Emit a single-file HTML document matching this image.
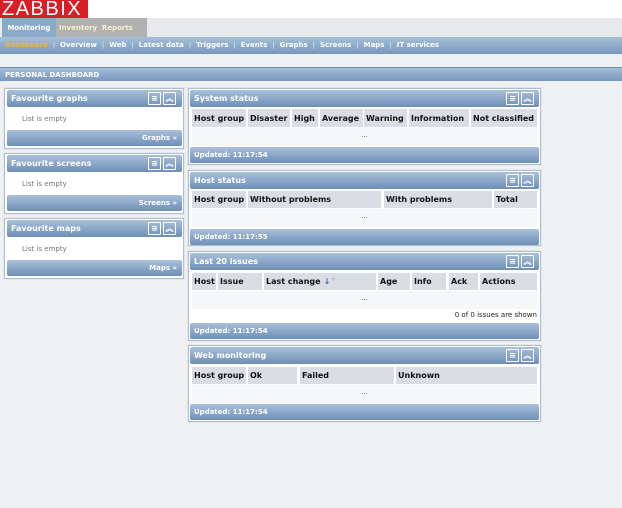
<!DOCTYPE html>
<html><head><meta charset="utf-8"><style>
*{margin:0;padding:0;box-sizing:border-box}
body{width:622px;height:508px;background:#eef0f2;font-family:"DejaVu Sans",sans-serif;font-size:8px;position:relative;overflow:hidden}
.a{position:absolute}
.hdr{position:absolute;background:linear-gradient(#a9c0da,#6e8fb6);color:#fff;font-weight:bold;font-size:8px;padding-left:4px;display:flex;align-items:center;border-radius:2px}
.box{position:absolute;background:#fff;border:1px solid #aebdd0;box-shadow:0 0 0 1px #e3e8ee}
.ic{position:absolute;top:2px;width:13px;height:13px;border:1px solid #fff;border-radius:1px;color:#fff;font-size:8px;line-height:11px;text-align:center}
.cell{position:absolute;background:#d9dee5;font-weight:bold;color:#111;font-size:8px;padding-left:2px;display:flex;align-items:center;white-space:nowrap;overflow:hidden}
.dots{position:absolute;color:#555;font-size:7px;text-align:center}
</style></head><body>
<div class="a" style="left:0;top:0;width:622px;height:18px;background:#fff"></div>
<div class="a" style="left:0;top:0;width:88px;height:18px;background:#d52027;color:#fff;font-family:'Liberation Sans',sans-serif;font-size:20px;line-height:19px;padding-left:2px;letter-spacing:1.5px">ZABBIX</div>
<div class="a" style="left:0;top:18px;width:622px;height:19px;background:#e7e9ec"></div>
<div class="a" style="left:2px;top:18px;width:54px;height:19px;background:#8ca9c9;color:#fff;font-weight:bold;font-size:7px;line-height:20px;text-align:center">Monitoring</div>
<div class="a" style="left:56px;top:18px;width:91px;height:19px;background:#b1b1b1;color:#f3efd0;font-weight:bold;font-size:7px;line-height:20px;padding-left:3px;white-space:pre">Inventory  Reports</div>
<div class="a" style="left:0;top:37px;width:622px;height:17px;background:linear-gradient(#a7bfd9,#7698bd);color:#fff;font-weight:bold;font-size:7px;line-height:17px;padding-left:5px;white-space:pre"><span style="color:#f2b233">Dashboard</span><span style="color:#d0dcea">  |  </span>Overview<span style="color:#d0dcea">  |  </span>Web<span style="color:#d0dcea">  |  </span>Latest data<span style="color:#d0dcea">  |  </span>Triggers<span style="color:#d0dcea">  |  </span>Events<span style="color:#d0dcea">  |  </span>Graphs<span style="color:#d0dcea">  |  </span>Screens<span style="color:#d0dcea">  |  </span>Maps<span style="color:#d0dcea">  |  </span>IT services</div>
<div class="a" style="left:0;top:67px;width:622px;height:14px;background:linear-gradient(#a3bcd7,#7898bd);color:#fff;font-weight:bold;font-size:7px;line-height:14px;padding-left:5px;border-top:1px solid #6d8cb1">PERSONAL DASHBOARD</div>

<div class="box" style="left:4px;top:88px;width:180px;height:61px"></div>
<div class="hdr" style="left:7px;top:90px;width:175px;height:17px">Favourite graphs<span class="ic" style="left:141px">≡</span><span class="ic" style="left:156px">︽</span></div>
<div class="a" style="left:22px;top:115px;color:#777;font-size:7px">List is empty</div>
<div class="hdr" style="left:7px;top:130px;width:175px;height:16px;justify-content:flex-end;padding-right:5px;font-size:7px">Graphs »</div>

<div class="box" style="left:4px;top:153px;width:180px;height:61px"></div>
<div class="hdr" style="left:7px;top:155px;width:175px;height:17px">Favourite screens<span class="ic" style="left:141px">≡</span><span class="ic" style="left:156px">︽</span></div>
<div class="a" style="left:22px;top:180px;color:#777;font-size:7px">List is empty</div>
<div class="hdr" style="left:7px;top:195px;width:175px;height:16px;justify-content:flex-end;padding-right:5px;font-size:7px">Screens »</div>

<div class="box" style="left:4px;top:218px;width:180px;height:61px"></div>
<div class="hdr" style="left:7px;top:220px;width:175px;height:17px">Favourite maps<span class="ic" style="left:141px">≡</span><span class="ic" style="left:156px">︽</span></div>
<div class="a" style="left:22px;top:245px;color:#777;font-size:7px">List is empty</div>
<div class="hdr" style="left:7px;top:260px;width:175px;height:16px;justify-content:flex-end;padding-right:5px;font-size:7px">Maps »</div>

<div class="box" style="left:188px;top:88px;width:353px;height:77px"></div>
<div class="hdr" style="left:190px;top:90px;width:349px;height:17px">System status<span class="ic" style="left:316px">≡</span><span class="ic" style="left:331px">︽</span></div>
<div class="cell" style="left:192px;top:109px;width:54px;height:18px">Host group</div>
<div class="cell" style="left:248px;top:109px;width:42px;height:18px">Disaster</div>
<div class="cell" style="left:292px;top:109px;width:26px;height:18px">High</div>
<div class="cell" style="left:320px;top:109px;width:43px;height:18px">Average</div>
<div class="cell" style="left:364px;top:109px;width:43px;height:18px">Warning</div>
<div class="cell" style="left:409px;top:109px;width:60px;height:18px">Information</div>
<div class="cell" style="left:471px;top:109px;width:66px;height:18px">Not classified</div>
<div class="a" style="left:192px;top:128px;width:345px;height:18px;background:#f5f7f9"></div>
<div class="dots" style="left:192px;top:131px;width:345px">...</div>
<div class="hdr" style="left:190px;top:147px;width:349px;height:16px;font-size:7px">Updated: 11:17:54</div>

<div class="box" style="left:188px;top:170px;width:353px;height:76px"></div>
<div class="hdr" style="left:190px;top:172px;width:349px;height:17px">Host status<span class="ic" style="left:316px">≡</span><span class="ic" style="left:331px">︽</span></div>
<div class="cell" style="left:192px;top:191px;width:54px;height:17px">Host group</div>
<div class="cell" style="left:248px;top:191px;width:133px;height:17px">Without problems</div>
<div class="cell" style="left:384px;top:191px;width:108px;height:17px">With problems</div>
<div class="cell" style="left:494px;top:191px;width:43px;height:17px">Total</div>
<div class="a" style="left:192px;top:209px;width:345px;height:18px;background:#f5f7f9"></div>
<div class="dots" style="left:192px;top:212px;width:345px">...</div>
<div class="hdr" style="left:190px;top:229px;width:349px;height:16px;font-size:7px">Updated: 11:17:55</div>

<div class="box" style="left:188px;top:251px;width:353px;height:90px"></div>
<div class="hdr" style="left:190px;top:253px;width:349px;height:17px">Last 20 issues<span class="ic" style="left:316px">≡</span><span class="ic" style="left:331px">︽</span></div>
<div class="cell" style="left:192px;top:273px;width:24px;height:17px">Host</div>
<div class="cell" style="left:218px;top:273px;width:44px;height:17px">Issue</div>
<div class="cell" style="left:264px;top:273px;width:112px;height:17px">Last change <span style="color:#3a63a8;margin-left:3px">↓</span><span style="color:#bbb;font-size:7px;margin-top:-6px">+</span></div>
<div class="cell" style="left:378px;top:273px;width:32px;height:17px">Age</div>
<div class="cell" style="left:412px;top:273px;width:34px;height:17px">Info</div>
<div class="cell" style="left:449px;top:273px;width:29px;height:17px">Ack</div>
<div class="cell" style="left:480px;top:273px;width:57px;height:17px">Actions</div>
<div class="a" style="left:192px;top:291px;width:345px;height:18px;background:#f5f7f9"></div>
<div class="dots" style="left:192px;top:294px;width:345px">...</div>
<div class="a" style="left:360px;top:311px;width:177px;text-align:right;font-size:7px;color:#222;white-space:nowrap">0 of 0 issues are shown</div>
<div class="hdr" style="left:190px;top:323px;width:349px;height:16px;font-size:7px">Updated: 11:17:54</div>

<div class="box" style="left:188px;top:345px;width:353px;height:77px"></div>
<div class="hdr" style="left:190px;top:347px;width:349px;height:17px">Web monitoring<span class="ic" style="left:316px">≡</span><span class="ic" style="left:331px">︽</span></div>
<div class="cell" style="left:192px;top:367px;width:54px;height:17px">Host group</div>
<div class="cell" style="left:248px;top:367px;width:49px;height:17px">Ok</div>
<div class="cell" style="left:300px;top:367px;width:94px;height:17px">Failed</div>
<div class="cell" style="left:396px;top:367px;width:141px;height:17px">Unknown</div>
<div class="a" style="left:192px;top:385px;width:345px;height:18px;background:#f5f7f9"></div>
<div class="dots" style="left:192px;top:388px;width:345px">...</div>
<div class="hdr" style="left:190px;top:404px;width:349px;height:16px;font-size:7px">Updated: 11:17:54</div>
</body></html>
